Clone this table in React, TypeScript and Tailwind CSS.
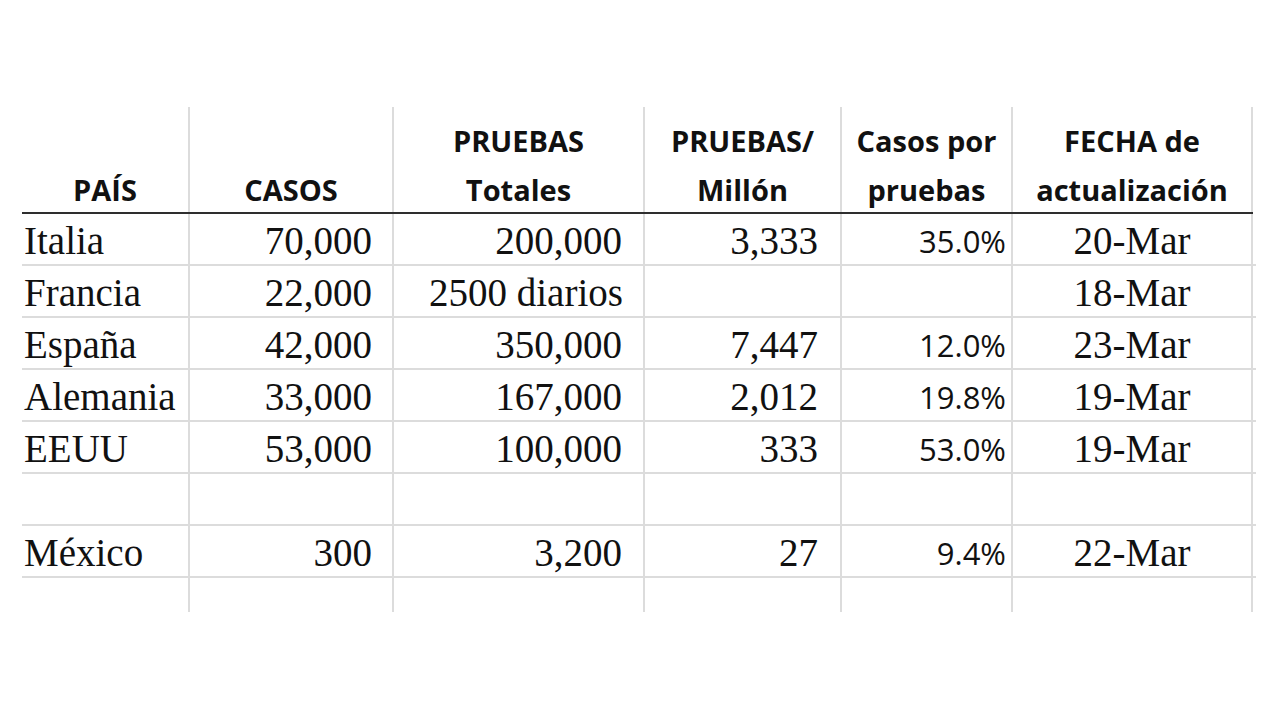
import React from 'react';

type Row = {
  pais: string;
  casos: string;
  pruebas: string;
  porMillon: string;
  ratio: string;
  fecha: string;
};

const rows: Row[] = [
  { pais: 'Italia', casos: '70,000', pruebas: '200,000', porMillon: '3,333', ratio: '35.0%', fecha: '20-Mar' },
  { pais: 'Francia', casos: '22,000', pruebas: '2500 diarios', porMillon: '', ratio: '', fecha: '18-Mar' },
  { pais: 'España', casos: '42,000', pruebas: '350,000', porMillon: '7,447', ratio: '12.0%', fecha: '23-Mar' },
  { pais: 'Alemania', casos: '33,000', pruebas: '167,000', porMillon: '2,012', ratio: '19.8%', fecha: '19-Mar' },
  { pais: 'EEUU', casos: '53,000', pruebas: '100,000', porMillon: '333', ratio: '53.0%', fecha: '19-Mar' },
  { pais: '', casos: '', pruebas: '', porMillon: '', ratio: '', fecha: '' },
  { pais: 'México', casos: '300', pruebas: '3,200', porMillon: '27', ratio: '9.4%', fecha: '22-Mar' },
];

const serif = "font-['Liberation_Serif','Times_New_Roman',serif]";
const sans = "font-['Open_Sans','Liberation_Sans',sans-serif]";

const cell = 'border-r-2 border-[#dcdcdc] shrink-0';
const widths = ['w-[168px]', 'w-[204px]', 'w-[251px]', 'w-[197px]', 'w-[171px]', 'w-[240px]'];

const headers: string[][] = [
  ['PAÍS'],
  ['CASOS'],
  ['PRUEBAS', 'Totales'],
  ['PRUEBAS/', 'Millón'],
  ['Casos por', 'pruebas'],
  ['FECHA de', 'actualización'],
];

const App: React.FC = () => {
  return (
    <div className="w-[1280px] h-[720px] bg-white overflow-hidden pt-[107px] pl-[22px] text-[#111]">
      {/* header */}
      <div className="flex h-[107px] border-b-2 border-[#2e2e2e] w-[1231px]">
        {headers.map((lines, i) => (
          <div key={i} className={`${cell} ${widths[i]} flex items-end justify-center`}>
            <div className={`${sans} font-bold text-[29px] leading-[49px] text-center mb-[-2px]`}>
              {lines.map((l) => (
                <div key={l}>{l}</div>
              ))}
            </div>
          </div>
        ))}
      </div>

      {/* body rows */}
      {rows.map((r, idx) => (
        <div key={idx} className="flex h-[52px] border-b-2 border-[#dcdcdc] w-[1234px]">
          <div className={`${cell} ${widths[0]} ${serif} text-[39px] leading-[46px] pt-[4px] pl-[2px] whitespace-nowrap`}>
            {r.pais}
          </div>
          <div className={`${cell} ${widths[1]} ${serif} text-[39px] leading-[46px] pt-[4px] pr-[20px] text-right`}>
            {r.casos}
          </div>
          <div
            className={`${cell} ${widths[2]} ${serif} text-[39px] leading-[46px] pt-[4px] whitespace-nowrap ${
              r.pruebas.includes('diarios') ? 'pl-[35px] text-left' : 'pr-[21px] text-right'
            }`}
          >
            {r.pruebas}
          </div>
          <div className={`${cell} ${widths[3]} ${serif} text-[39px] leading-[46px] pt-[4px] pr-[22px] text-right`}>
            {r.porMillon}
          </div>
          <div className={`${cell} ${widths[4]} ${sans} text-[31px] leading-[48px] pt-[3px] pr-[5px] text-right`}>
            {r.ratio}
          </div>
          <div className={`${cell} ${widths[5]} ${serif} text-[39px] leading-[46px] pt-[4px] text-center`}>
            {r.fecha}
          </div>
        </div>
      ))}

      {/* trailing partial row */}
      <div className="flex h-[34px] w-[1231px]">
        {widths.map((w) => (
          <div key={w} className={`${cell} ${w}`} />
        ))}
      </div>
    </div>
  );
};

export default App;
